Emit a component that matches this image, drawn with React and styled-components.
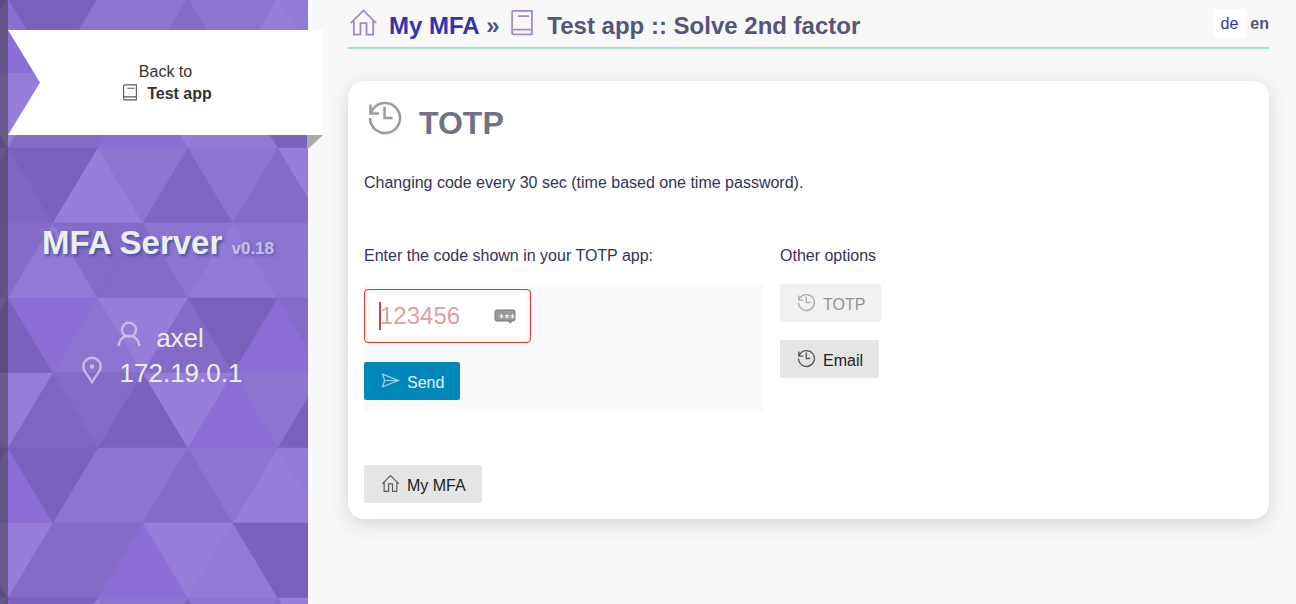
import React from 'react'
import styled, { createGlobalStyle, css } from 'styled-components'

const GlobalStyle = createGlobalStyle`
  * {
    box-sizing: border-box;
  }

  body {
    margin: 0;
    background: #f8f8f8;
    color: #335;
    font: 16px/22px "Liberation Sans", Arial, sans-serif;
  }

  a {
    text-decoration: none;
  }
`;

const Page = styled.div`
  display: grid;
  grid-template-columns: 308px 1fr;
  min-height: 100vh;
`;

const Sidebar = styled.aside`
  position: relative;
  border-left: 8px solid rgba(60, 60, 60, 0.5);
  padding-top: 30px;
  color: #eee;
  text-align: center;
`;

const Backdrop = styled.svg`
  position: absolute;
  top: 0;
  left: -8px;
  z-index: -1;
  width: 308px;
  height: 100%;
  background: #866dca;
`;

const Ribbon = styled.a`
  position: relative;
  display: flex;
  flex-direction: column;
  align-items: center;
  justify-content: center;
  height: 105px;
  margin-right: -15px;
  background: #fff;
  clip-path: polygon(0 0, 100% 0, 100% 100%, 0 100%, 32px 50%);
  color: #333;
`;

const RibbonFold = styled.div`
  width: 16px;
  height: 15px;
  margin: 0 -15px 0 auto;
  background: #aaa;
  clip-path: polygon(0 0, 100% 0, 0 100%);
`;

const RibbonTitle = styled.strong`
  display: flex;
  align-items: center;
  gap: 8px;
  padding-left: 2px;

  svg {
    margin-bottom: 4px;
    opacity: 0.8;
  }
`;

const Brand = styled.h1`
  margin: 71px 0 0;
  font-size: 33px;
  line-height: 44px;
  text-shadow: 2px 2px 3px #4455a5;

  small {
    font-size: 17px;
    opacity: 0.6;
  }
`;

const Facts = styled.ul`
  margin: 50px 0 0;
  padding: 0 0 0 4px;
  list-style: none;
  font-size: 26px;
  line-height: 35px;
`;

const Fact = styled.li`
  display: flex;
  justify-content: center;
  gap: 14px;

  svg {
    opacity: 0.6;
  }
`;

const Main = styled.main`
  padding: 8px 27px 40px 40px;
`;

const Header = styled.header`
  display: flex;
  justify-content: space-between;
  height: 41px;
  border-bottom: 2px solid #a8e0c8;
`;

const Crumbs = styled.h2`
  display: flex;
  margin: 0;
  color: #557;
  font-size: 24px;
  line-height: 36px;
  white-space: pre;

  a {
    color: #33a;
  }

  svg {
    color: #a388c8;
  }
`;

const CrumbIcon = styled.span`
  display: flex;
  width: 41px;
  padding-left: ${({ $indent }) => $indent}px;
`;

const Languages = styled.nav`
  display: flex;
  gap: 4px;
  height: 29px;
  margin-top: 1px;
  line-height: 30px;
  color: #557;

  a {
    padding: 0 8px;
    background: #fff;
    color: #33a;
  }
`;

const Card = styled.section`
  margin-top: 32px;
  padding: 16px;
  border-radius: 16px;
  background: #fff;
  box-shadow: 0 5px 20px rgba(0, 0, 0, 0.15);

  p {
    margin: 0;
  }
`;

const CardTitle = styled.h3`
  display: flex;
  gap: 16px;
  margin: 0 0 23px;
  color: #707088;
  font-size: 32px;
  line-height: 52px;

  svg {
    margin: 3px 0 0 3px;
    opacity: 0.7;
  }
`;

const Columns = styled.div`
  display: flex;
  gap: 16px;
  margin: 51px 0 53px;
`;

const Column = styled.div`
  width: ${({ $width }) => $width}px;
`;

const CodeForm = styled.form`
  margin-top: 17px;
  padding: 5px 0 12px;
  background: #f8fafc;
`;

const CodeField = styled.div`
  display: flex;
  align-items: center;
  width: 167px;
  height: 54px;
  margin-bottom: 19px;
  padding: 0 14px;
  border: 1px solid #e33;
  border-radius: 4px;
  background: #fff;
  box-shadow: inset 0 0 6px rgba(0, 0, 0, 0.1);
`;

const Caret = styled.span`
  flex: none;
  width: 2px;
  height: 28px;
  margin-right: -1px;
  background: #b44;
`;

const CodeInput = styled.input`
  flex: 1;
  min-width: 0;
  padding: 0;
  border: 0;
  outline: 0;
  background: none;
  color: #b44;
  font: 24px/28px "Liberation Sans", Arial, sans-serif;

  &::placeholder {
    color: #dea0a0;
    opacity: 1;
  }
`;

const Options = styled.div`
  display: flex;
  flex-direction: column;
  align-items: flex-start;
  gap: 18px;
  margin-top: 17px;
`;

const buttonStyle = css`
  display: inline-flex;
  align-items: center;
  gap: 7px;
  height: 38px;
  padding: 4px 16px 0 17px;
  border: 0;
  border-radius: 2px;
  background: ${({ $primary }) => ($primary ? '#0088bb' : '#e5e5e5')};
  color: ${({ $primary }) => ($primary ? '#eef' : '#222')};
  font: 16px/22px "Liberation Sans", Arial, sans-serif;

  svg {
    margin-bottom: 5px;
    opacity: 0.7;
  }

  &:disabled {
    opacity: 0.5;
  }
`;

const Button = styled.button`${buttonStyle}`;
const ButtonLink = styled.a`${buttonStyle}`;

const SHADES = {
  d: '#7b61be',
  e: '#8066c3',
  s: '#846bc8',
  m: '#8c74d1',
  n: '#9179d6',
  l: '#967dda',
  v: '#8a6dd5'
}

// one 450px high tile, triangles from left to right
const ROWS = [
  'dvdmmsmln',
  'dlssvlndd',
  'medlmemsl',
  'esnssmnmm',
  'mdvmlsdvs',
  'mlesdlvmd'
]

const triangles = Array.from({ length: 16 * 9 }, (_, i) => {
  const row = Math.floor(i / 9)
  const col = i % 9
  const x = col * 45 - 82
  const y = row * 75 - 2
  const up = (row + col) % 2 === 1
  return {
    points: up
      ? `${x + 45},${y} ${x},${y + 75} ${x + 90},${y + 75}`
      : `${x},${y} ${x + 90},${y} ${x + 45},${y + 75}`,
    fill: SHADES[ROWS[row % 6][col]]
  }
})

const Icon = ({ size, stroke = 1.5, children }) =>
  <svg
    width={size}
    height={size}
    viewBox="0 0 24 24"
    fill="none"
    stroke="currentColor"
    strokeWidth={stroke}
    aria-hidden="true"
  >
    {children}
  </svg>

const HomeIcon = (props) =>
  <Icon {...props}>
    <path d="M1.500 12.500 12 2l10.500 10.500M4 10.500V22h5.500V12.500h5V22H20V10.500" />
  </Icon>

const BookIcon = (props) =>
  <Icon {...props}>
    <path d="M20.500 2.500H5A1.500 1.500 0 0 0 3.500 4v17A1.500 1.500 0 0 0 5 22.500h15.500zM3.500 18.500h17M8.500 7H18" />
  </Icon>

const HistoryIcon = (props) =>
  <Icon {...props}>
    <path d="M2 12A10 10 0 1 0 3.600 6.600L2.600 8.600M2.300 3v6H8M11.700 4.500V12H17" />
  </Icon>

const UserIcon = (props) =>
  <Icon {...props}>
    <circle cx="12" cy="8" r="6.500" />
    <path d="M2.500 23a9.500 9.500 0 0 1 19 0" />
  </Icon>

const PinIcon = (props) =>
  <Icon {...props}>
    <path d="M12 22.500C9 17 4.500 13 4.500 9a7.500 7.500 0 0 1 15 0c0 4-4.500 8-7.500 13.500z" />
    <circle cx="12" cy="9" r="1" fill="currentColor" />
  </Icon>

const SendIcon = (props) =>
  <Icon {...props}>
    <path d="M2 4l20 8L2 20l2.500-8zM4.500 12H20" />
  </Icon>

const PasswordIcon = () =>
  <svg width="22" height="16" viewBox="0 0 22 16" aria-hidden="true">
    <path d="M3 2h16a2 2 0 0 1 2 2v7a2 2 0 0 1-2 2h-2v2l-3-2H3a2 2 0 0 1-2-2V4a2 2 0 0 1 2-2z" fill="#999" stroke="#777" />
    <path d="M7.500 6v4.500M5.500 7.200l4 2.300M9.500 7.200l-4 2.300M13 6v4.500M11 7.200l4 2.300M15 7.200l-4 2.300M18.500 6v4.500M16.500 7.200l4 2.300M20.500 7.200l-4 2.300" stroke="#fff" strokeWidth=".8" />
  </svg>

export default () =>
  <Page>
    <GlobalStyle />
    <Sidebar>
      <Backdrop aria-hidden="true">
        {
          triangles.map(({ points, fill }, key) =>
            <polygon key={key} points={points} fill={fill} stroke={fill} strokeWidth=".5" />
          )
        }
      </Backdrop>
      <Ribbon href="#app">
        Back to
        <RibbonTitle><BookIcon size={18} />Test app</RibbonTitle>
      </Ribbon>
      <RibbonFold />
      <Brand>MFA Server <small>v0.18</small></Brand>
      <Facts>
        <Fact><UserIcon size={26} stroke={2} />axel</Fact>
        <Fact><PinIcon size={28} stroke={2} />172.19.0.1</Fact>
      </Facts>
    </Sidebar>
    <Main>
      <Header>
        <Crumbs>
          <CrumbIcon $indent={1}><HomeIcon size={29} /></CrumbIcon>
          <a href="#home">My MFA</a> » <CrumbIcon $indent={2}><BookIcon size={28} /></CrumbIcon>
          Test app :: Solve 2nd factor
        </Crumbs>
        <Languages>
          <a href="#de">de</a>
          <strong>en</strong>
        </Languages>
      </Header>
      <Card>
        <CardTitle><HistoryIcon size={36} stroke={1.7} />TOTP</CardTitle>
        <p>Changing code every 30 sec (time based one time password).</p>
        <Columns>
          <Column $width={400}>
            <label htmlFor="code">Enter the code shown in your TOTP app:</label>
            <CodeForm>
              <CodeField>
                <Caret />
                <CodeInput id="code" placeholder="123456" />
                <PasswordIcon />
              </CodeField>
              <Button type="button" $primary><SendIcon size={19} />Send</Button>
            </CodeForm>
          </Column>
          <Column>
            <p>Other options</p>
            <Options>
              <Button type="button" disabled><HistoryIcon size={19} stroke={1.7} />TOTP</Button>
              <Button type="button"><HistoryIcon size={19} stroke={1.7} />Email</Button>
            </Options>
          </Column>
        </Columns>
        <ButtonLink href="#home"><HomeIcon size={19} />My MFA</ButtonLink>
      </Card>
    </Main>
  </Page>
